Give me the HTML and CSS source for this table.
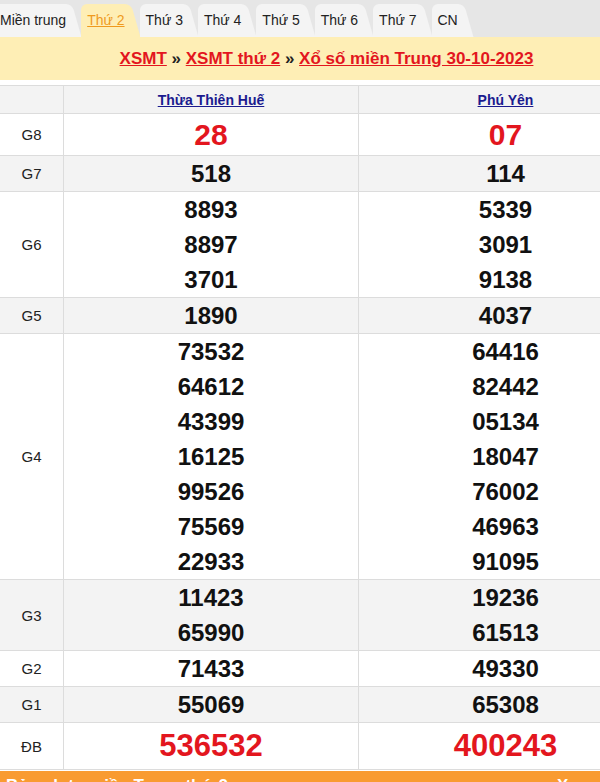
FILE: index.html
```html
<!DOCTYPE html>
<html lang="vi">
<head>
<meta charset="utf-8">
<link rel="stylesheet" href="styles.css">
</head>
<body>
<div class="page">
  <nav class="tabs">
    <a class="tab first">Miền trung</a>
    <a class="tab active">Thứ 2</a>
    <a class="tab">Thứ 3</a>
    <a class="tab">Thứ 4</a>
    <a class="tab">Thứ 5</a>
    <a class="tab">Thứ 6</a>
    <a class="tab">Thứ 7</a>
    <a class="tab">CN</a>
  </nav>
  <div class="banner">
    <a class="crumb">XSMT</a> » <a class="crumb">XSMT thứ 2</a> » <a class="crumb">Xổ số miền Trung 30-10-2023</a>
  </div>
  <table class="results">
    <tr class="head">
      <td class="label"></td>
      <td><a class="prov">Thừa Thiên Huế</a></td>
      <td><a class="prov">Phú Yên</a></td>
    </tr>
    <tr class="big">
      <td class="label">G8</td>
      <td><div class="num red">28</div></td>
      <td><div class="num red">07</div></td>
    </tr>
    <tr class="alt">
      <td class="label">G7</td>
      <td><div class="num">518</div></td>
      <td><div class="num">114</div></td>
    </tr>
    <tr>
      <td class="label">G6</td>
      <td><div class="num">8893</div><div class="num">8897</div><div class="num">3701</div></td>
      <td><div class="num">5339</div><div class="num">3091</div><div class="num">9138</div></td>
    </tr>
    <tr class="alt">
      <td class="label">G5</td>
      <td><div class="num">1890</div></td>
      <td><div class="num">4037</div></td>
    </tr>
    <tr>
      <td class="label">G4</td>
      <td><div class="num">73532</div><div class="num">64612</div><div class="num">43399</div><div class="num">16125</div><div class="num">99526</div><div class="num">75569</div><div class="num">22933</div></td>
      <td><div class="num">64416</div><div class="num">82442</div><div class="num">05134</div><div class="num">18047</div><div class="num">76002</div><div class="num">46963</div><div class="num">91095</div></td>
    </tr>
    <tr class="alt">
      <td class="label">G3</td>
      <td><div class="num">11423</div><div class="num">65990</div></td>
      <td><div class="num">19236</div><div class="num">61513</div></td>
    </tr>
    <tr>
      <td class="label">G2</td>
      <td><div class="num">71433</div></td>
      <td><div class="num">49330</div></td>
    </tr>
    <tr class="alt">
      <td class="label">G1</td>
      <td><div class="num">55069</div></td>
      <td><div class="num">65308</div></td>
    </tr>
    <tr class="special">
      <td class="label">ĐB</td>
      <td><div class="num red">536532</div></td>
      <td><div class="num red">400243</div></td>
    </tr>
  </table>
  <div class="footbar">
    <span>Bảng loto miền Trung thứ 2</span>
    <span>Xem</span>
  </div>
</div>
</body>
</html>
```

FILE: styles.css
```css
html, body {
  margin: 0;
  padding: 0;
  overflow: hidden;
  background: #fff;
}

.page {
  width: 653px;
  font-family: "Liberation Sans", Arial, sans-serif;
  color: #222;
}

.tabs {
  display: flex;
  align-items: flex-end;
  height: 37px;
  background: #e6e6e6;
  margin-left: -6px;
  overflow: hidden;
}

.tab {
  position: relative;
  z-index: 0;
  display: block;
  height: 33px;
  line-height: 32px;
  padding-left: 6px;
  margin-right: 15px;
  background: #f4f4f4;
  border-top-left-radius: 6px;
  font-size: 14px;
  color: #222;
  white-space: nowrap;
}

.tab::after {
  content: "";
  position: absolute;
  z-index: -1;
  top: 0;
  bottom: 0;
  right: -6px;
  width: 22px;
  background: inherit;
  border-top-right-radius: 6px;
  transform: skewX(16deg);
  transform-origin: top;
}

.tab.active {
  background: #feeeb5;
  color: #ef9a1e;
  text-decoration: underline;
}

.banner {
  background: #feeeb5;
  height: 43px;
  line-height: 43px;
  text-align: center;
  font-size: 17px;
  font-weight: bold;
  color: #222;
  margin-bottom: 5px;
}

.crumb {
  color: #e3161e;
  text-decoration: underline;
}

.results {
  width: 653px;
  border-collapse: collapse;
  table-layout: fixed;
}

.results td {
  border: 1px solid #dcdcdc;
  padding: 0;
  text-align: center;
  vertical-align: middle;
}

.results td:first-child {
  width: 63px;
  border-left: none;
}

.results td:nth-child(2) {
  width: 294px;
}

.results tr.alt td {
  background: #f3f3f3;
}

.results tr.head td {
  height: 27px;
  background: #f3f3f3;
}

.label {
  font-size: 15px;
  color: #222;
}

.prov {
  font-size: 14px;
  font-weight: bold;
  color: #1b1b8f;
  text-decoration: underline;
}

.num {
  font-size: 24px;
  font-weight: bold;
  line-height: 35px;
  color: #111;
}

.big .num {
  font-size: 30px;
  line-height: 41px;
}

.special .num {
  font-size: 31px;
  line-height: 46px;
}

.red {
  color: #e3161e;
}

.footbar {
  display: flex;
  justify-content: space-between;
  background: #f99b31;
  color: #fff;
  font-weight: bold;
  font-size: 17px;
  height: 30px;
  line-height: 30px;
  padding: 0 60px 0 6px;
  margin-top: 1px;
}
```
